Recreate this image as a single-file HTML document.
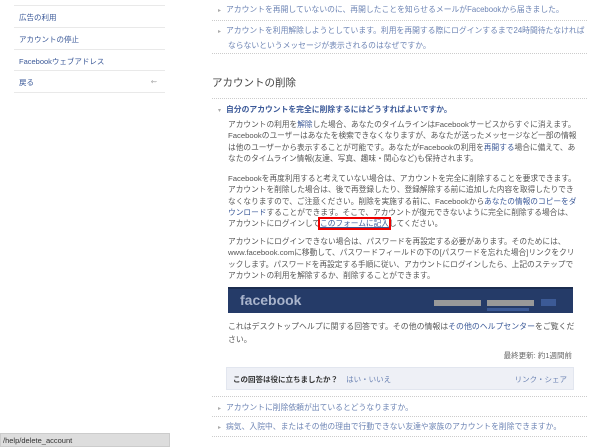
<!DOCTYPE html>
<html><head><meta charset="utf-8"><style>
*{margin:0;padding:0;box-sizing:border-box}
body{width:600px;height:447px;overflow:hidden;background:#fff;font-family:"Liberation Sans","Noto Sans CJK JP",sans-serif;font-size:8px;color:#555;position:relative}
.a{position:absolute}
.si{position:absolute;left:14px;width:151px;height:22px;border-top:1px solid #e9e9e9;color:#3b5998;padding:6px 5px;font-size:7.5px}
.dot{position:absolute;left:212px;width:375px;border-top:1px dotted #ccc}
.q{position:absolute;left:218px;color:#6d84b4;font-size:7.8px;line-height:13px}
.q:before{content:"▸";font-size:6px;color:#aaa;margin-right:5px}
p{position:absolute;left:228px;width:352px;line-height:11.3px;font-size:7.7px;color:#555}
.l{color:#3b5998}
</style></head><body>
<div class="si" style="top:5px">広告の利用</div>
<div class="si" style="top:27px">アカウントの停止</div>
<div class="si" style="top:49px">Facebookウェブアドレス</div>
<div class="si" style="top:70px">戻る<span style="position:absolute;right:8px;color:#aaa">⇜</span></div>
<div class="si" style="top:92px;height:0"></div>

<div class="q" style="top:3px">アカウントを再開していないのに、再開したことを知らせるメールがFacebookから届きました。</div>
<div class="dot" style="top:20px"></div>
<div class="q" style="top:24px;width:370px;padding-left:10px;text-indent:-10px">アカウントを利用解除しようとしています。利用を再開する際にログインするまで24時間待たなければならないというメッセージが表示されるのはなぜですか。</div>
<div class="dot" style="top:53px"></div>
<div class="a" style="left:212px;top:75px;font-size:10.5px;color:#444">アカウントの削除</div>
<div class="dot" style="top:98px"></div>
<div class="a" style="left:218px;top:104px;font-weight:bold;color:#3b5998;font-size:7.8px"><span style="font-size:6px;color:#aaa;font-weight:normal;margin-right:5px">▾</span>自分のアカウントを完全に削除するにはどうすればよいですか。</div>
<p style="top:119px">アカウントの利用を<span class="l">解除</span>した場合、あなたのタイムラインはFacebookサービスからすぐに消えます。Facebookのユーザーはあなたを検索できなくなりますが、あなたが送ったメッセージなど一部の情報は他のユーザーから表示することが可能です。あなたがFacebookの利用を<span class="l">再開する</span>場合に備えて、あなたのタイムライン情報(友達、写真、趣味・関心など)も保持されます。</p>
<p style="top:173px">Facebookを再度利用すると考えていない場合は、アカウントを完全に削除することを要求できます。アカウントを削除した場合は、後で再登録したり、登録解除する前に追加した内容を取得したりできなくなりますので、ご注意ください。削除を実施する前に、Facebookから<span class="l">あなたの情報のコピーをダウンロード</span>することができます。そこで、アカウントが復元できないように完全に削除する場合は、アカウントにログインして<span class="l" style="text-decoration:underline;outline:2px solid #e00;outline-offset:0">このフォームに記入</span>してください。</p>
<p style="top:236px">アカウントにログインできない場合は、パスワードを再設定する必要があります。そのためには、www.facebook.comに移動して、パスワードフィールドの下の[パスワードを忘れた場合]リンクをクリックします。パスワードを再設定する手順に従い、アカウントにログインしたら、上記のステップでアカウントの利用を解除するか、削除することができます。</p>
<div class="a" style="left:228px;top:287px;width:345px;height:26px;background:#253b68;border-top:2px solid #1c2d50">
<div class="a" style="left:12px;top:3px;color:#a9b4cc;font-weight:bold;font-size:14px">facebook</div>
<div class="a" style="left:206px;top:11px;width:47px;height:6px;background:#999"></div>
<div class="a" style="left:259px;top:11px;width:47px;height:6px;background:#999"></div>
<div class="a" style="left:313px;top:10px;width:15px;height:7px;background:#3c5a96"></div>
<div class="a" style="left:259px;top:19px;width:42px;height:3px;background:#3c5a96"></div>
</div>
<p style="top:320px;font-size:7.9px;line-height:13px;width:348px">これはデスクトップヘルプに関する回答です。その他の情報は<span class="l">その他のヘルプセンター</span>をご覧ください。</p>
<div class="a" style="right:28px;top:350px;font-size:7.5px;color:#666">最終更新: 約1週間前</div>
<div class="a" style="left:226px;top:367px;width:348px;height:23px;background:#eef0f6;border:1px solid #e2e6ef;font-size:7.5px;padding:6px 6px">
<b style="color:#333">この回答は役に立ちましたか？</b> <span style="color:#6d84b4;margin-left:6px">はい・いいえ</span><span style="position:absolute;right:6px;color:#6d84b4">リンク・シェア</span></div>
<div class="dot" style="top:396px"></div>
<div class="q" style="top:401px">アカウントに削除依頼が出ているとどうなりますか。</div>
<div class="dot" style="top:416px"></div>
<div class="q" style="top:420px">病気、入院中、またはその他の理由で行動できない友達や家族のアカウントを削除できますか。</div>
<div class="dot" style="top:436px"></div>
<div class="a" style="left:0;top:433px;width:170px;height:14px;background:#ddd;border:1px solid #ccc;font-size:7.5px;color:#333;padding:2px 2px">/help/delete_account</div>
</body></html>
